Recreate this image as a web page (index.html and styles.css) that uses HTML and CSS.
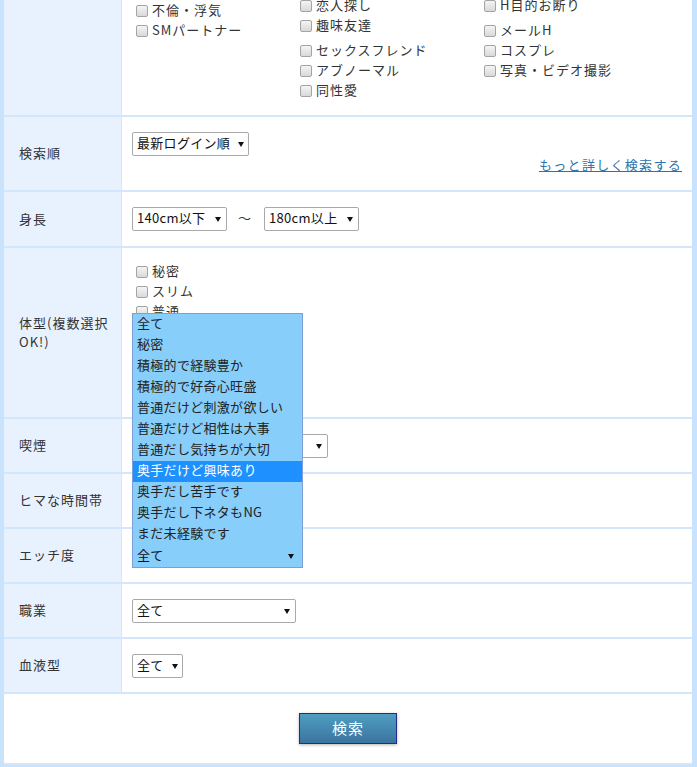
FILE: index.html
```html
<!DOCTYPE html>
<html lang="ja">
<head>
<meta charset="utf-8">
<title>検索</title>
<link rel="stylesheet" href="styles.css">
</head>
<body>
<div class="page">
  <div class="row">
    <div class="label"></div>
    <div class="purpose">
      <div class="col col1">
        <div class="cb"><span class="box"></span><span class="t">不倫・浮気</span></div>
        <div class="cb"><span class="box"></span><span class="t">SMパートナー</span></div>
      </div>
      <div class="col col2">
        <div class="cb"><span class="box"></span><span class="t">恋人探し</span></div>
        <div class="cb"><span class="box"></span><span class="t">趣味友達</span></div>
        <div class="cb gap"><span class="box"></span><span class="t">セックスフレンド</span></div>
        <div class="cb"><span class="box"></span><span class="t">アブノーマル</span></div>
        <div class="cb"><span class="box"></span><span class="t">同性愛</span></div>
      </div>
      <div class="col col3">
        <div class="cb"><span class="box"></span><span class="t">H目的お断り</span></div>
        <div class="cb gap"><span class="box"></span><span class="t">メールH</span></div>
        <div class="cb"><span class="box"></span><span class="t">コスプレ</span></div>
        <div class="cb"><span class="box"></span><span class="t">写真・ビデオ撮影</span></div>
      </div>
    </div>
  </div>

  <div class="row">
    <div class="label"><span class="t">検索順</span></div>
    <div class="cell order">
      <div class="sel w117"><span class="t">最新ログイン順</span><i class="arr"></i></div>
      <div class="more"><a href="#">もっと詳しく検索する</a></div>
    </div>
  </div>

  <div class="row">
    <div class="label"><span class="t">身長</span></div>
    <div class="cell height">
      <div class="sel w95"><span class="t">140cm以下</span><i class="arr"></i></div>
      <span class="tilde">～</span>
      <div class="sel w95"><span class="t">180cm以上</span><i class="arr"></i></div>
    </div>
  </div>

  <div class="row">
    <div class="label"><span class="t">体型(複数選択<br>OK!)</span></div>
    <div class="cell checks">
      <div class="cb"><span class="box"></span><span class="t">秘密</span></div>
      <div class="cb"><span class="box"></span><span class="t">スリム</span></div>
      <div class="cb"><span class="box"></span><span class="t">普通</span></div>
      <div class="cb"><span class="box"></span><span class="t">筋肉質</span></div>
      <div class="cb"><span class="box"></span><span class="t">ややぽっちゃり</span></div>
      <div class="cb"><span class="box"></span><span class="t">ぽっちゃり</span></div>
      <div class="cb"><span class="box"></span><span class="t">グラマー</span></div>
    </div>
  </div>

  <div class="row">
    <div class="label"><span class="t">喫煙</span></div>
    <div class="cell">
      <div class="sel w196"><span class="t">全て</span><i class="arr"></i></div>
    </div>
  </div>

  <div class="row">
    <div class="label"><span class="t">ヒマな時間帯</span></div>
    <div class="cell">
      <div class="sel w160"><span class="t">全て</span><i class="arr"></i></div>
    </div>
  </div>

  <div class="row">
    <div class="label"><span class="t">エッチ度</span></div>
    <div class="cell">
      <div class="sel w171 open"><span class="t">全て</span><i class="arr"></i>
        <ul class="dropdown">
          <li><span class="t">全て</span></li>
          <li><span class="t">秘密</span></li>
          <li><span class="t">積極的で経験豊か</span></li>
          <li><span class="t">積極的で好奇心旺盛</span></li>
          <li><span class="t">普通だけど刺激が欲しい</span></li>
          <li><span class="t">普通だけど相性は大事</span></li>
          <li><span class="t">普通だし気持ちが大切</span></li>
          <li class="hl"><span class="t">奥手だけど興味あり</span></li>
          <li><span class="t">奥手だし苦手です</span></li>
          <li><span class="t">奥手だし下ネタもNG</span></li>
          <li><span class="t">まだ未経験です</span></li>
        </ul>
      </div>
    </div>
  </div>

  <div class="row">
    <div class="label"><span class="t">職業</span></div>
    <div class="cell">
      <div class="sel w164"><span class="t">全て</span><i class="arr"></i></div>
    </div>
  </div>

  <div class="row">
    <div class="label"><span class="t">血液型</span></div>
    <div class="cell">
      <div class="sel w51"><span class="t">全て</span><i class="arr"></i></div>
    </div>
  </div>

  <div class="submit-row">
    <button class="btn" type="button">検索</button>
  </div>
</div>
</body>
</html>
```

FILE: styles.css
```css
html, body {
  margin: 0;
  padding: 0;
  background: #ffffff;
}

body {
  font-family: "Noto Sans CJK JP", "Noto Sans", sans-serif;
  font-size: 13px;
  color: #333333;
  overflow: hidden;
}

.page {
  border-left: 4px solid #cae3fc;
  border-right: 5px solid #cae3fc;
  border-bottom: 4px solid #cae3fc;
  background: #ffffff;
}

.row {
  display: grid;
  grid-template-columns: 118px 1fr;
  border-bottom: 2px solid #d2e7fb;
}

/* nudge glyphs up: Noto CJK sits a little low in its line box */
.t {
  display: block;
  margin-top: -2px;
}

.label {
  box-sizing: border-box;
  background: #e8f2ff;
  border-right: 1px solid #d2e7fb;
  padding-left: 15px;
  display: flex;
  align-items: center;
  letter-spacing: 1px;
  line-height: 19px;
  color: #333333;
}

.cell {
  padding: 15px 10px 14px 10px;
  display: flex;
  flex-direction: column;
  align-items: flex-start;
}

/* first (scrolled) row */
.purpose {
  height: 115px;
  padding: 0 0 0 14px;
  box-sizing: border-box;
  display: grid;
  grid-template-columns: 164px 184px auto;
  align-items: start;
}

.col {
  display: flex;
  flex-direction: column;
}

.col1 { margin-top: 1px; }
.col2 { margin-top: -4px; }
.col3 { margin-top: -4px; }
.cb.gap { margin-top: 5px; }

.cb {
  display: flex;
  align-items: center;
  gap: 4px;
  height: 20px;
  line-height: 18px;
  letter-spacing: 1px;
  white-space: nowrap;
}

.box {
  box-sizing: border-box;
  width: 12px;
  height: 12px;
  border: 1px solid #a4a4a4;
  border-radius: 2px;
  background: linear-gradient(#f4f4f4, #d9d9d9);
  flex: none;
}

.checks {
  padding: 14px 10px 15px 14px;
}

/* selects */
.sel {
  box-sizing: border-box;
  display: flex;
  align-items: center;
  justify-content: space-between;
  gap: 8px;
  height: 24px;
  line-height: 18px;
  padding: 0 5px 0 4px;
  border: 1px solid #a9a9a9;
  border-radius: 2px;
  background: #ffffff;
  color: #111111;
  letter-spacing: 0.3px;
  white-space: nowrap;
  flex: none;
}

.arr {
  display: block;
  width: 0;
  height: 0;
  border-left: 3px solid transparent;
  border-right: 3px solid transparent;
  border-top: 5px solid #111111;
}

.w196 { width: 196px; }
.w160 { width: 160px; }
.w171 { width: 171px; }
.w164 { width: 164px; }
.w117 { width: 117px; }
.w95 { width: 95px; }
.w51 { width: 51px; }

.order {
  padding-bottom: 15px;
  align-items: stretch;
}

.order .sel {
  align-self: flex-start;
}

.more {
  height: 19px;
  line-height: 18px;
  text-align: right;
}

.more a {
  color: #2a74ad;
  letter-spacing: 1.3px;
  text-decoration: underline;
}

.height {
  padding-bottom: 15px;
  flex-direction: row;
  align-items: center;
}

.tilde {
  margin: -2px 13px 0 11px;
  line-height: 18px;
  color: #333333;
}

/* open dropdown */
.sel.open {
  position: relative;
  background: #87cefa;
  border-color: #7e9ed6;
  border-radius: 0;
  padding-right: 8px;
}

.dropdown {
  position: absolute;
  left: -1px;
  bottom: 100%;
  z-index: 10;
  box-sizing: border-box;
  width: 171px;
  margin: 0;
  padding: 0;
  list-style: none;
  background: #87cefa;
  border: 1px solid #7e9ed6;
  border-bottom: none;
}

.dropdown li {
  display: flow-root;
  height: 21px;
  line-height: 21px;
  padding-left: 4px;
  color: #222222;
  letter-spacing: 0.3px;
  white-space: nowrap;
}

.dropdown li.hl {
  background: #1e90ff;
  color: #ffffff;
}

/* submit */
.submit-row {
  height: 69px;
  display: flex;
  align-items: center;
  justify-content: center;
  border-bottom: 2px solid #d2e7fb;
}

.btn {
  box-sizing: border-box;
  width: 98px;
  height: 31px;
  margin-top: -1px;
  border: 1px solid #232a8c;
  background: linear-gradient(#4f9dc0, #3b74a0);
  color: #ffffff;
  font-family: "Noto Sans CJK JP", sans-serif;
  font-size: 15px;
  letter-spacing: 1px;
  box-shadow: 0 1px 3px rgba(0, 0, 0, 0.3);
  padding: 0 0 2px 0;
}
```
